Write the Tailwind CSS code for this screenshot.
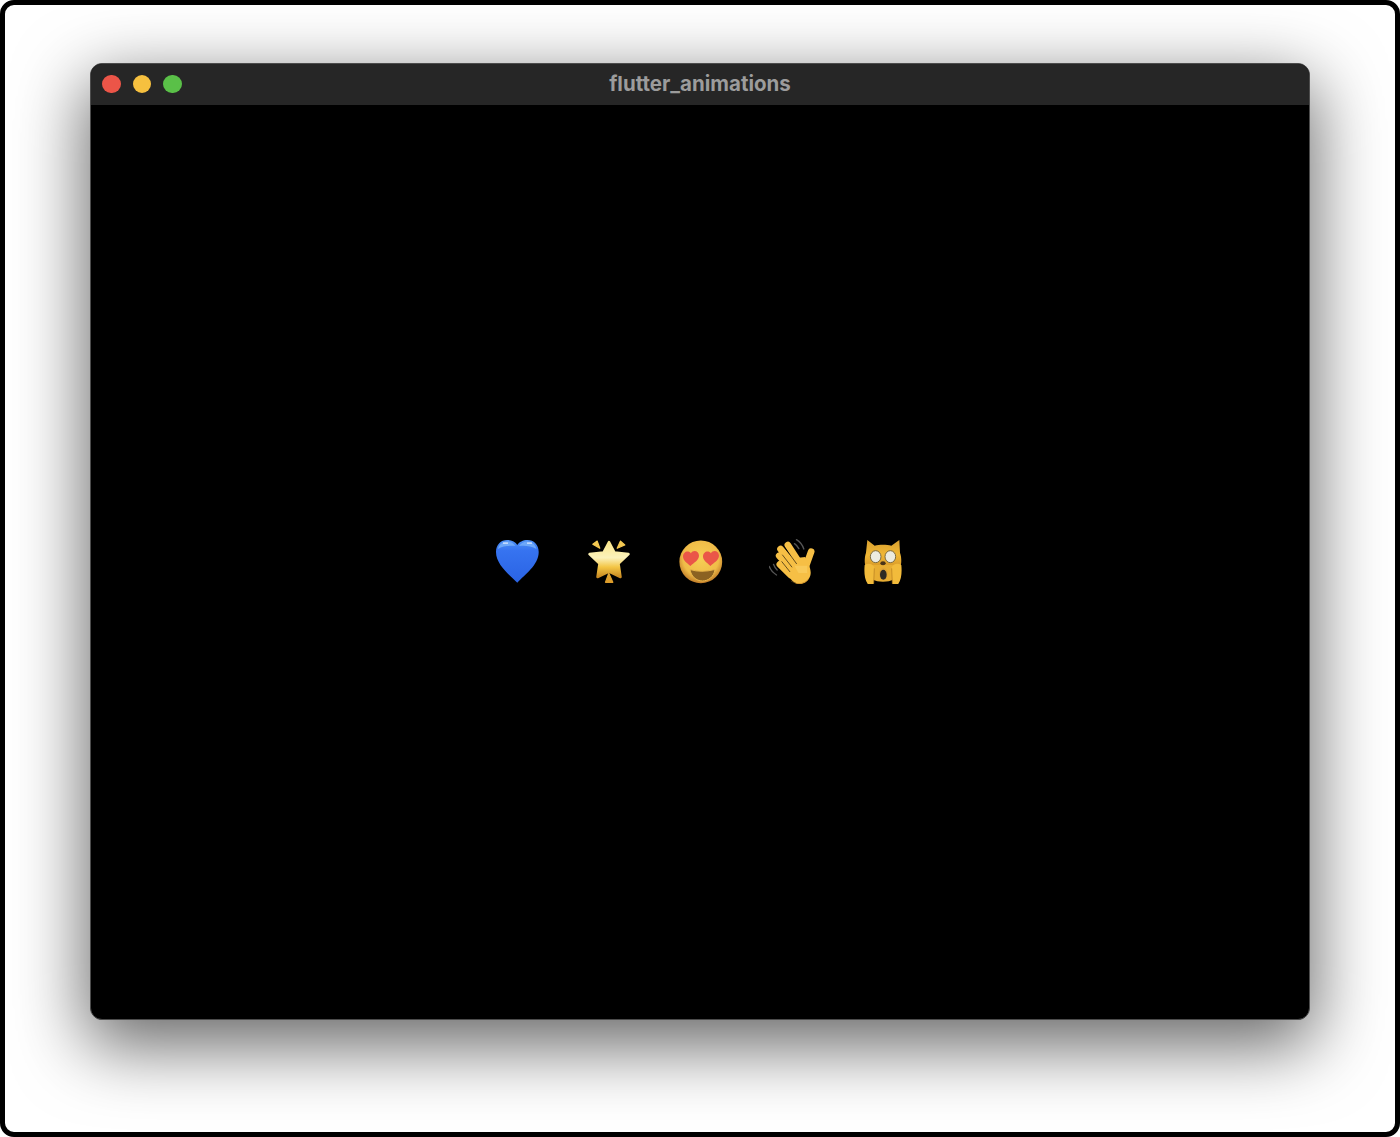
<!DOCTYPE html>
<html lang="en">
<head>
<meta charset="utf-8">
<title>flutter_animations</title>
<script src="https://cdn.jsdelivr.net/npm/@tailwindcss/browser@4"></script>
</head>
<body class="bg-white">
<div class="w-[1400px] h-[1137px] bg-white border-[5px] border-black rounded-[14px] flex items-start justify-center overflow-hidden">
  <div class="w-[1220px] h-[957px] mt-[58px] bg-black border border-[#4c4c4c] rounded-[12px] flex flex-col overflow-hidden shadow-[0_22px_70px_4px_rgba(0,0,0,0.6)]">
    <div class="relative h-[41px] shrink-0 bg-[#262626] flex items-center justify-center">
      <div class="absolute left-[11px] top-[10.5px] flex gap-[12px]">
        <span class="w-[18.5px] h-[18.5px] rounded-full bg-[#ec5548]"></span>
        <span class="w-[18.5px] h-[18.5px] rounded-full bg-[#f6c03f]"></span>
        <span class="w-[18.5px] h-[18.5px] rounded-full bg-[#5ac048]"></span>
      </div>
      <span class="font-['Inter',sans-serif] font-bold text-[20.5px] leading-none text-[#9c9c9c] mt-[-1px] [font-variant-ligatures:none]">flutter_animations</span>
    </div>
    <div class="flex-1 flex items-center justify-center gap-[45.5px] pb-[3px]">
      <svg class="w-[46px] h-[46px] shrink-0" viewBox="0 0 46 46">
        <defs>
          <linearGradient id="h" x1="0" y1="0" x2="0" y2="1"><stop offset="0" stop-color="#4f92f6"/><stop offset=".25" stop-color="#3673f0"/><stop offset="1" stop-color="#2a63e4"/></linearGradient>
        </defs>
        <path fill="url(#h)" d="M23.300 44.700C16 37 2 27 2 14 2 6.500 7 2 13 2c4.500 0 8.500 2 10.300 5C25 4 29 2 33.500 2 39.700 2 44.700 6.500 44.700 14 44.700 27 30.500 37 23.300 44.700Z"/>
        <path fill="#6ea8f8" d="M4 11C5 6 9 3.500 13 3.500c3.500 0 6.500 1.500 8.500 4.500C18 7.500 9 7.500 4 11ZM25 8c2-3 5-4.500 8.500-4.500 4.500 0 8 3 9 7.500C37 7.500 30 7.500 25 8Z"/>
        <path fill="#dbe9ff" d="M9 4.500h5v1.300H9ZM33 4.500h5v1.300h-5Z"/>
      </svg>
      <svg class="w-[46px] h-[46px] shrink-0" viewBox="0 0 46 46">
        <defs>
          <linearGradient id="s" x1="0" y1="0" x2="0" y2="1"><stop offset="0" stop-color="#fbe68a"/><stop offset=".45" stop-color="#fbf2bb"/><stop offset=".72" stop-color="#f3c544"/><stop offset="1" stop-color="#c98a22"/></linearGradient>
          <linearGradient id="s2" x1="0" y1="0" x2="0" y2="1"><stop offset="0" stop-color="#f6cc55"/><stop offset="1" stop-color="#dc9c2a"/></linearGradient>
        </defs>
        <path fill="url(#s)" stroke="url(#s)" stroke-width="2.500" stroke-linejoin="round" d="M23 4l5.500 10.500 14 1.500-10 9.500L34.500 39 23 33.500 11.500 39l2-13.500-10-9.500 14-1.500Z"/>
        <path fill="url(#s2)" stroke="url(#s2)" stroke-width="1.200" stroke-linejoin="round" d="M6.800 6.300l4.400-3.200 2.600 7.200ZM31.200 10.300l3.300-7.200 4.300 3.900ZM22.800 35.300l-3.300 9h7.300Z"/>
      </svg>
      <svg class="w-[46px] h-[46px] shrink-0" viewBox="0 0 46 46">
        <defs>
          <radialGradient id="f" cx=".5" cy=".42" r=".58"><stop offset="0" stop-color="#f6cf55"/><stop offset=".72" stop-color="#f0bc48"/><stop offset="1" stop-color="#c07c28"/></radialGradient>
        </defs>
        <circle cx="23.800" cy="23.800" r="21.400" fill="url(#f)"/>
        <path fill="#ea5648" d="M13.500 28C10 25 6 22.500 6 18.500c0-3 2.200-5 4.500-5 1.300 0 2.700.6 3.400 1.800.8-1.500 2.300-2.200 3.700-2.200 2.300 0 4.400 1.900 4.400 4.700 0 4.500-5.500 7.200-8.500 10.200ZM33.500 28c-3-3-7.500-5.500-7.500-9.500 0-3 2.200-5 4.500-5 1.300 0 2.700.6 3.400 1.800.8-1.500 2.300-2.200 3.700-2.200 2.300 0 4.400 1.900 4.400 4.700 0 4.500-5.500 7.200-8.500 10.200Z"/>
        <path fill="#8b6222" stroke="#e9b64a" stroke-width="1" d="M13 31.500Q24 35 38 31.500C37 39 31 43 25.500 43 19 43 14 38 13 31.500Z"/>
      </svg>
      <svg class="w-[46px] h-[46px] shrink-0" viewBox="0 0 46 46">
        <g transform="translate(-6.500 -3) scale(.3333)">
          <path fill="none" stroke="#555" stroke-width="4" stroke-linecap="round" d="M102 14c10 6 18 16 22 28M96 26c6 4 10 9 13 15M20 94c4 10 12 20 22 26M33 88c2 6 6 12 11 17"/>
          <g fill="none" stroke="#f6bf45" stroke-linecap="round">
            <path stroke-width="20" d="M76 30l36 56M54 42l42 50M50 62l36 40M52 88l32 32M146 50l-18 50"/>
          </g>
          <path fill="#f6bf45" d="M76 72l52-6c10 20 24 44 12 64-10 18-34 22-50 8-10-10-20-24-24-36Z"/>
          <path fill="#d99a2e" d="M84 136c14 14 42 12 56-8-4 14-22 22-38 18-8-2-14-5-18-10Z"/>
          <path fill="#fbd46a" d="M96 92h38v22H108Z" opacity=".55"/>
          <path fill="none" stroke="#000" stroke-opacity=".7" stroke-width="2.500" stroke-linecap="round" d="M70 42l32 44M60 60l28 36M58 80l24 30"/>
        </g>
      </svg>
      <svg class="w-[46px] h-[46px] shrink-0" viewBox="0 0 46 46">
        <defs>
          <linearGradient id="c" x1="0" y1="0" x2="0" y2="1"><stop offset="0" stop-color="#d9a02f"/><stop offset=".5" stop-color="#f0b735"/><stop offset="1" stop-color="#d29226"/></linearGradient>
        </defs>
        <g transform="translate(-7 -3) scale(.3333)">
          <path fill="url(#c)" d="M43 15l22 17c14-4 36-4 50 0l24-17 2 38c6 18 5 38-3 52H42c-8-14-9-34-3-52Z"/>
          <path fill="#e8ae33" d="M50 90h80v30c0 12-14 20-40 20S50 132 50 120Z"/>
          <path fill="#f2bb3b" d="M35 90c10-7 22-5 29 6l-2 52c-4 4-13 4-17 0-11-14-12-38-10-58ZM145 90c-10-7-22-5-29 6l2 52c4 4 13 4 17 0 11-14 12-38 10-58Z"/>
          <path fill="none" stroke="#b37c20" stroke-width="2" d="M64 100l-2 46M116 100l2 46"/>
          <ellipse cx="68" cy="65" rx="16" ry="18" fill="#ecebe0" stroke="#7a6a40" stroke-width="3"/>
          <ellipse cx="112" cy="65" rx="16" ry="18" fill="#ecebe0" stroke="#7a6a40" stroke-width="3"/>
          <ellipse cx="90" cy="85" rx="8" ry="6" fill="#4a3418"/>
          <ellipse cx="91" cy="117" rx="13" ry="19" fill="#e0a436"/>
          <ellipse cx="91" cy="119" rx="10" ry="15" fill="#2e2a24"/>
        </g>
      </svg>
    </div>
  </div>
</div>
</body>
</html>
